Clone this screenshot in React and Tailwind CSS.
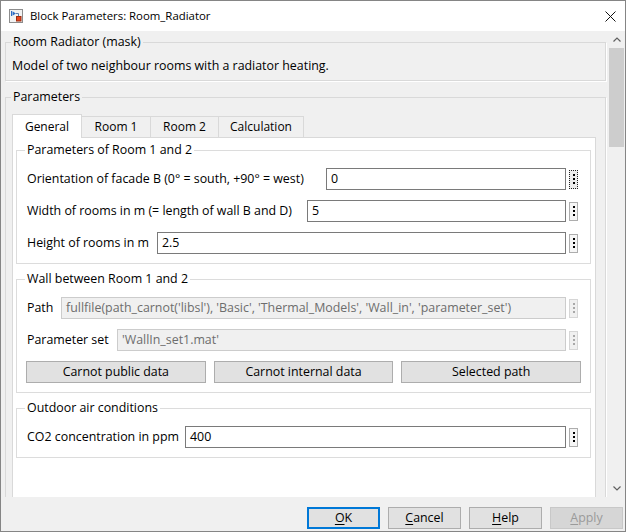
import React from 'react';

function BlockIcon() {
  return (
    <svg width="14" height="14" viewBox="0 0 14 14" className="shrink-0">
      <rect x="0.5" y="0.5" width="13" height="13" fill="#f2f2f2" stroke="#8c8c8c" />
      <path d="M2.5 2 V7" stroke="#2c6cc4" strokeWidth="1" />
      <path d="M3.5 2.2 L6.8 4.5 L3.5 6.8 Z" fill="#2c6cc4" />
      <path d="M6.8 4.5 H9.5 V7" stroke="#5a7fb0" strokeWidth="1" fill="none" />
      <rect x="7.5" y="7.5" width="4.5" height="4.5" fill="#e8461e" stroke="#9c2c10" />
    </svg>
  );
}

function Dots({ focused, disabled }) {
  const box = focused
    ? 'border border-dotted border-[#222222] bg-[#ececec]'
    : disabled
    ? 'border border-[#d6d6d6] bg-[#f0f0f0]'
    : 'border border-[#adadad] bg-[#f6f6f6]';
  return (
    <div className={`ml-[3px] w-[9px] h-[19px] shrink-0 flex flex-col items-center justify-center gap-[2px] ${box}`}>
      {[0, 1, 2].map((i) => (
        <span key={i} className={`w-[2px] h-[2px] ${disabled ? 'bg-[#a8a8a8]' : 'bg-black'}`} />
      ))}
    </div>
  );
}

function Field({ label, labelW, value, disabled, focused }) {
  return (
    <div className="flex items-center h-[22px]">
      <span className={`${labelW} shrink-0 whitespace-nowrap`}>{label}</span>
      <div
        className={`flex-1 min-w-0 h-[22px] border px-[4px] flex items-center whitespace-nowrap overflow-hidden ${
          disabled ? 'bg-[#f0f0f0] border-[#cccccc] text-[#6d6d6d]' : 'bg-white border-[#7a7a7a]'
        }`}
      >
        {value}
      </div>
      <Dots focused={focused} disabled={disabled} />
    </div>
  );
}

function Group({ title, children }) {
  return (
    <fieldset className="border border-[#dcdcdc] pl-[10px] pr-[12px] pb-[9px]">
      <legend className="-ml-[2px] px-[2px] leading-[16px]">{title}</legend>
      <div className="pt-[10px] flex flex-col gap-[10px]">{children}</div>
    </fieldset>
  );
}

function WinButton({ children, primary, disabled }) {
  let cls = 'border-[#adadad] bg-[#e1e1e1]';
  if (primary) cls = 'border-[#0078d7] bg-[#e1e1e1] shadow-[inset_0_0_0_1px_#0078d7]';
  if (disabled) cls = 'border-[#c8c8c8] bg-[#d6d6d6] text-[#9a9a9a]';
  return (
    <div className={`w-[73px] h-[22px] border flex items-center justify-center ${cls}`}>{children}</div>
  );
}

export default function App() {
  const tabs = [
    { name: 'Room 1', w: 'w-[69px]' },
    { name: 'Room 2', w: 'w-[68px]' },
    { name: 'Calculation', w: 'w-[85px]' },
  ];

  return (
    <div className="w-[626px] h-[532px] border border-[#858585] bg-[#f0f0f0] flex flex-col overflow-hidden text-[12.4px] leading-[16px] text-black font-['Open_Sans',sans-serif]">
      {/* title bar */}
      <div className="h-[30px] shrink-0 bg-white flex items-center pl-[8px] pr-[9px]">
        <BlockIcon />
        <span className="ml-[7px] flex-1 text-[11.4px]">Block Parameters: Room_Radiator</span>
        <svg width="11" height="11" viewBox="0 0 11 11">
          <path d="M0.5 0.5 L10.5 10.5 M10.5 0.5 L0.5 10.5" stroke="#111" strokeWidth="1" />
        </svg>
      </div>

      {/* body */}
      <div className="h-[466px] shrink-0 flex">
        <div className="flex-1 min-w-0 overflow-hidden pt-[3px] pl-[4px] pr-[2px]">
          <fieldset className="border border-[#d9d9d9] shadow-[1px_1px_0_#ffffff] pl-[7px] pr-[8px] pb-[6px]">
            <legend className="-ml-[2px] px-[2px] leading-[16px]">Room Radiator (mask)</legend>
            <div className="pt-[8px] -ml-px whitespace-nowrap">Model of two neighbour rooms with a radiator heating.</div>
          </fieldset>

          <fieldset className="mt-[8px] border border-[#d9d9d9] shadow-[1px_1px_0_#ffffff] pl-[7px] pr-[9px] pb-[10px]">
            <legend className="-ml-[2px] px-[2px] leading-[16px]">Parameters</legend>
            <div className="-ml-px pt-[9px]">
              <div className="flex items-end h-[24px] border-b border-[#d9d9d9] text-[12px]">
                <div className="relative -mb-px w-[70px] h-[24px] bg-white border border-b-0 border-[#d9d9d9] flex items-center justify-center">
                  General
                </div>
                {tabs.map((t) => (
                  <div
                    key={t.name}
                    className={`${t.w} h-[21px] border-t border-r border-[#d9d9d9] bg-[#f0f0f0] flex items-center justify-center`}
                  >
                    {t.name}
                  </div>
                ))}
              </div>

              <div className="bg-white border-x border-[#d9d9d9] pt-[4px] pl-[3px] pr-[4px] pb-[60px] flex flex-col gap-[7px]">
                <Group title="Parameters of Room 1 and 2">
                  <Field label="Orientation of facade B (0° = south, +90° = west)" labelW="w-[299px]" value="0" focused />
                  <Field label="Width of rooms in m (= length of wall B and D)" labelW="w-[280px]" value="5" />
                  <Field label="Height of rooms in m" labelW="w-[130px]" value="2.5" />
                </Group>

                <Group title="Wall between Room 1 and 2">
                  <Field
                    label="Path"
                    labelW="w-[34px]"
                    value="fullfile(path_carnot('libsl'), 'Basic', 'Thermal_Models', 'Wall_in', 'parameter_set')"
                    disabled
                  />
                  <Field label="Parameter set" labelW="w-[90px]" value="'WallIn_set1.mat'" disabled />
                  <div className="-ml-px -mr-[3px] grid grid-cols-3 gap-[8px]">
                    <div className="h-[22px] border border-[#adadad] bg-[#e1e1e1] flex items-center justify-center">Carnot public data</div>
                    <div className="h-[22px] border border-[#adadad] bg-[#e1e1e1] flex items-center justify-center">Carnot internal data</div>
                    <div className="h-[22px] border border-[#adadad] bg-[#e1e1e1] flex items-center justify-center">Selected path</div>
                  </div>
                </Group>

                <Group title="Outdoor air conditions">
                  <Field label="CO2 concentration in ppm" labelW="w-[158px]" value="400" />
                </Group>
              </div>
            </div>
          </fieldset>
        </div>

        {/* scrollbar */}
        <div className="w-[17px] shrink-0 bg-[#f0f0f0] flex flex-col">
          <div className="h-[17px] flex items-center justify-center">
            <svg width="8" height="5" viewBox="0 0 8 5">
              <path d="M0.5 4.5 L4 1 L7.5 4.5" stroke="#606060" strokeWidth="1.2" fill="none" />
            </svg>
          </div>
          <div className="mx-px h-[99px] bg-[#cdcdcd]" />
          <div className="flex-1" />
          <div className="h-[17px] flex items-center justify-center">
            <svg width="8" height="5" viewBox="0 0 8 5">
              <path d="M0.5 0.5 L4 4 L7.5 0.5" stroke="#606060" strokeWidth="1.2" fill="none" />
            </svg>
          </div>
        </div>
      </div>

      {/* bottom buttons */}
      <div className="flex-1 flex justify-end items-start gap-[8px] pt-[10px] pr-[2px]">
        <WinButton primary>
          <span className="underline underline-offset-2">O</span>K
        </WinButton>
        <WinButton>
          <span className="underline underline-offset-2">C</span>ancel
        </WinButton>
        <WinButton>
          <span className="underline underline-offset-2">H</span>elp
        </WinButton>
        <WinButton disabled>
          <span className="underline underline-offset-2">A</span>pply
        </WinButton>
      </div>
    </div>
  );
}
